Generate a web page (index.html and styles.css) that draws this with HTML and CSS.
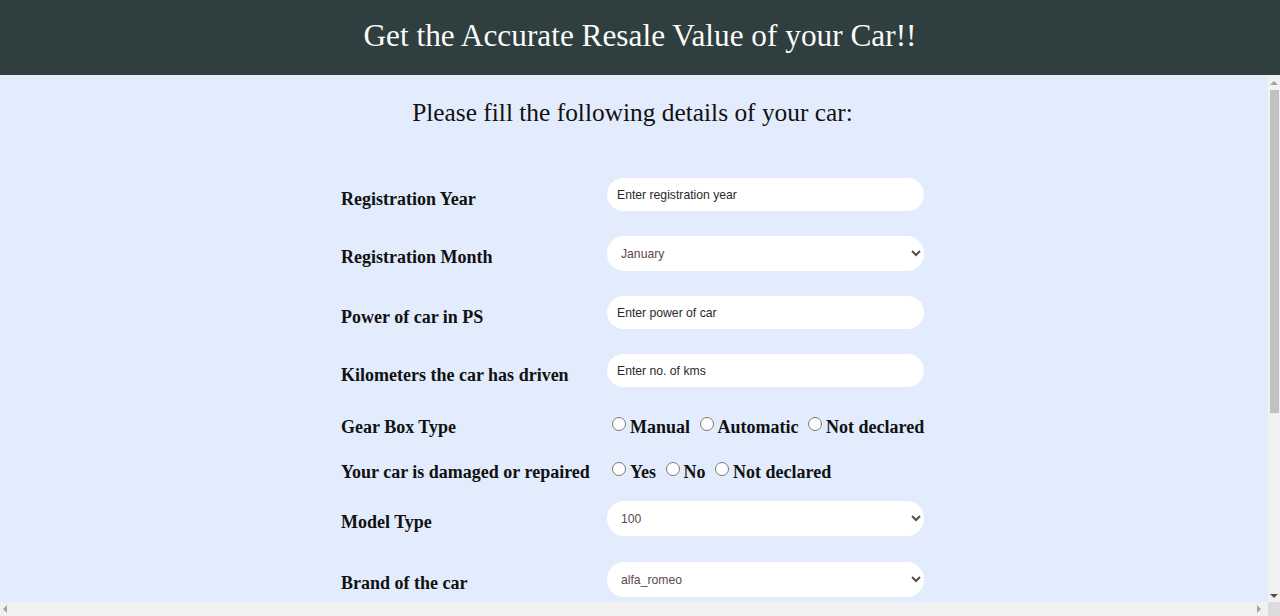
FILE: index.html
```html
<!DOCTYPE html>
<html lang="en">
<head>
<meta charset="utf-8">
<title>Car Resale Value</title>
<link rel="stylesheet" href="styles.css">
</head>
<body>
<header class="topbar">
  <h1 class="title">Get the Accurate Resale Value of your Car!!</h1>
</header>
<div class="viewport">
  <main class="content">
    <h2 class="subtitle">Please fill the following details of your car:</h2>
    <form class="form">
      <label class="label" for="year">Registration Year</label>
      <div class="cell"><input class="field" id="year" type="text" placeholder="Enter registration year"></div>

      <label class="label" for="month">Registration Month</label>
      <div class="cell">
        <select class="select" id="month">
          <option>January</option><option>February</option><option>March</option>
        </select>
      </div>

      <label class="label" for="power">Power of car in PS</label>
      <div class="cell"><input class="field" id="power" type="text" placeholder="Enter power of car"></div>

      <label class="label" for="kms">Kilometers the car has driven</label>
      <div class="cell"><input class="field" id="kms" type="text" placeholder="Enter no. of kms"></div>

      <span class="label">Gear Box Type</span>
      <div class="choices">
        <input type="radio" id="g1" name="gear"><label for="g1">Manual</label>
        <input type="radio" id="g2" name="gear"><label for="g2">Automatic</label>
        <input type="radio" id="g3" name="gear"><label for="g3">Not declared</label>
      </div>

      <span class="label">Your car is damaged or repaired</span>
      <div class="choices">
        <input type="radio" id="d1" name="damage"><label for="d1">Yes</label>
        <input type="radio" id="d2" name="damage"><label for="d2">No</label>
        <input type="radio" id="d3" name="damage"><label for="d3">Not declared</label>
      </div>

      <label class="label" for="model">Model Type</label>
      <div class="cell">
        <select class="select" id="model">
          <option>100</option><option>145</option><option>147</option>
        </select>
      </div>

      <label class="label" for="brand">Brand of the car</label>
      <div class="cell">
        <select class="select" id="brand">
          <option>alfa_romeo</option><option>audi</option><option>bmw</option>
        </select>
      </div>
    </form>
  </main>
  <div class="vscroll">
    <div class="vbtn"><span class="arrow arrow-up"></span></div>
    <div class="vthumb"></div>
    <div class="vrest"></div>
    <div class="vbtn vbtn-bottom"><span class="arrow arrow-down"></span></div>
  </div>
</div>
<div class="hscroll">
  <div class="htrack">
    <span class="arrow arrow-left"></span>
    <span class="arrow arrow-right"></span>
  </div>
  <div class="corner"></div>
</div>
</body>
</html>
```

FILE: styles.css
```css
html, body {
  margin: 0;
  padding: 0;
}

body {
  height: 616px;
  display: flex;
  flex-direction: column;
  overflow: hidden;
  background: #e2ecfd;
  font-family: "Liberation Serif", "Times New Roman", serif;
  color: #111;
}

.topbar {
  flex: none;
  height: 75px;
  box-sizing: border-box;
  padding-top: 19px;
  background: #2f3e3f;
}

.title {
  margin: 0;
  text-align: center;
  color: #fbfbf7;
  font-weight: normal;
  font-size: 31.3px;
  line-height: 34px;
}

.viewport {
  flex: 1;
  min-height: 0;
  display: flex;
}

.content {
  flex: 1;
  min-width: 0;
  overflow: hidden;
  padding-right: 3px;
}

.subtitle {
  margin: 22px 0 0;
  text-align: center;
  font-weight: normal;
  font-size: 25.4px;
  line-height: 30px;
  color: #111;
}

.form {
  display: grid;
  grid-template-columns: 266px 317px;
  grid-template-rows: 58px 60px 58px 52px 45px 50px 61px 40px;
  width: 583px;
  margin: 51px auto 0;
}

.label {
  padding-top: 11px;
  font-weight: bold;
  font-size: 18px;
  line-height: 20px;
  color: #111;
}

.cell {
  display: flex;
  align-items: flex-start;
}

.field,
.select {
  box-sizing: border-box;
  width: 317px;
  margin: 0;
  border: none;
  border-radius: 17px;
  background: #fff;
  font-family: "Liberation Sans", Arial, sans-serif;
  font-size: 12.2px;
  outline: none;
}

.field {
  height: 33px;
  padding: 0 10px;
  color: #222;
}

.field::placeholder {
  color: #2a2a2a;
  opacity: 1;
}

.select {
  height: 35px;
  padding: 0 8px 0 10px;
  color: #5a4b4b;
}

.choices {
  padding-top: 11px;
  font-weight: bold;
  font-size: 18px;
  line-height: 20px;
  white-space: nowrap;
  color: #111;
}

.choices input {
  width: 14px;
  height: 14px;
  margin: 0 4px 0 5px;
  vertical-align: 2px;
}

/* drawn scrollbars */
.vscroll {
  flex: none;
  width: 12px;
  display: flex;
  flex-direction: column;
  background: #f1f1f1;
}

.vbtn {
  flex: none;
  height: 15px;
  display: flex;
  align-items: center;
  justify-content: center;
}

.vbtn-bottom {
  height: 12px;
}

.vthumb {
  flex: none;
  height: 323px;
  margin-left: 2px;
  width: 9px;
  background: #c1c1c1;
}

.vrest {
  flex: 1;
}

.hscroll {
  flex: none;
  height: 14px;
  display: flex;
  background: #f1f1f1;
}

.htrack {
  flex: 1;
  display: flex;
  align-items: center;
  justify-content: space-between;
  padding: 0 7px 0 3px;
}

.corner {
  flex: none;
  width: 12px;
  background: #dcdcdc;
}

.arrow {
  display: block;
  width: 0;
  height: 0;
}

.arrow-up {
  border-left: 4px solid transparent;
  border-right: 4px solid transparent;
  border-bottom: 4px solid #a3a3a3;
}

.arrow-down {
  border-left: 4px solid transparent;
  border-right: 4px solid transparent;
  border-top: 4px solid #505050;
}

.arrow-left {
  border-top: 4px solid transparent;
  border-bottom: 4px solid transparent;
  border-right: 4px solid #a3a3a3;
}

.arrow-right {
  border-top: 4px solid transparent;
  border-bottom: 4px solid transparent;
  border-left: 4px solid #a3a3a3;
}
```
